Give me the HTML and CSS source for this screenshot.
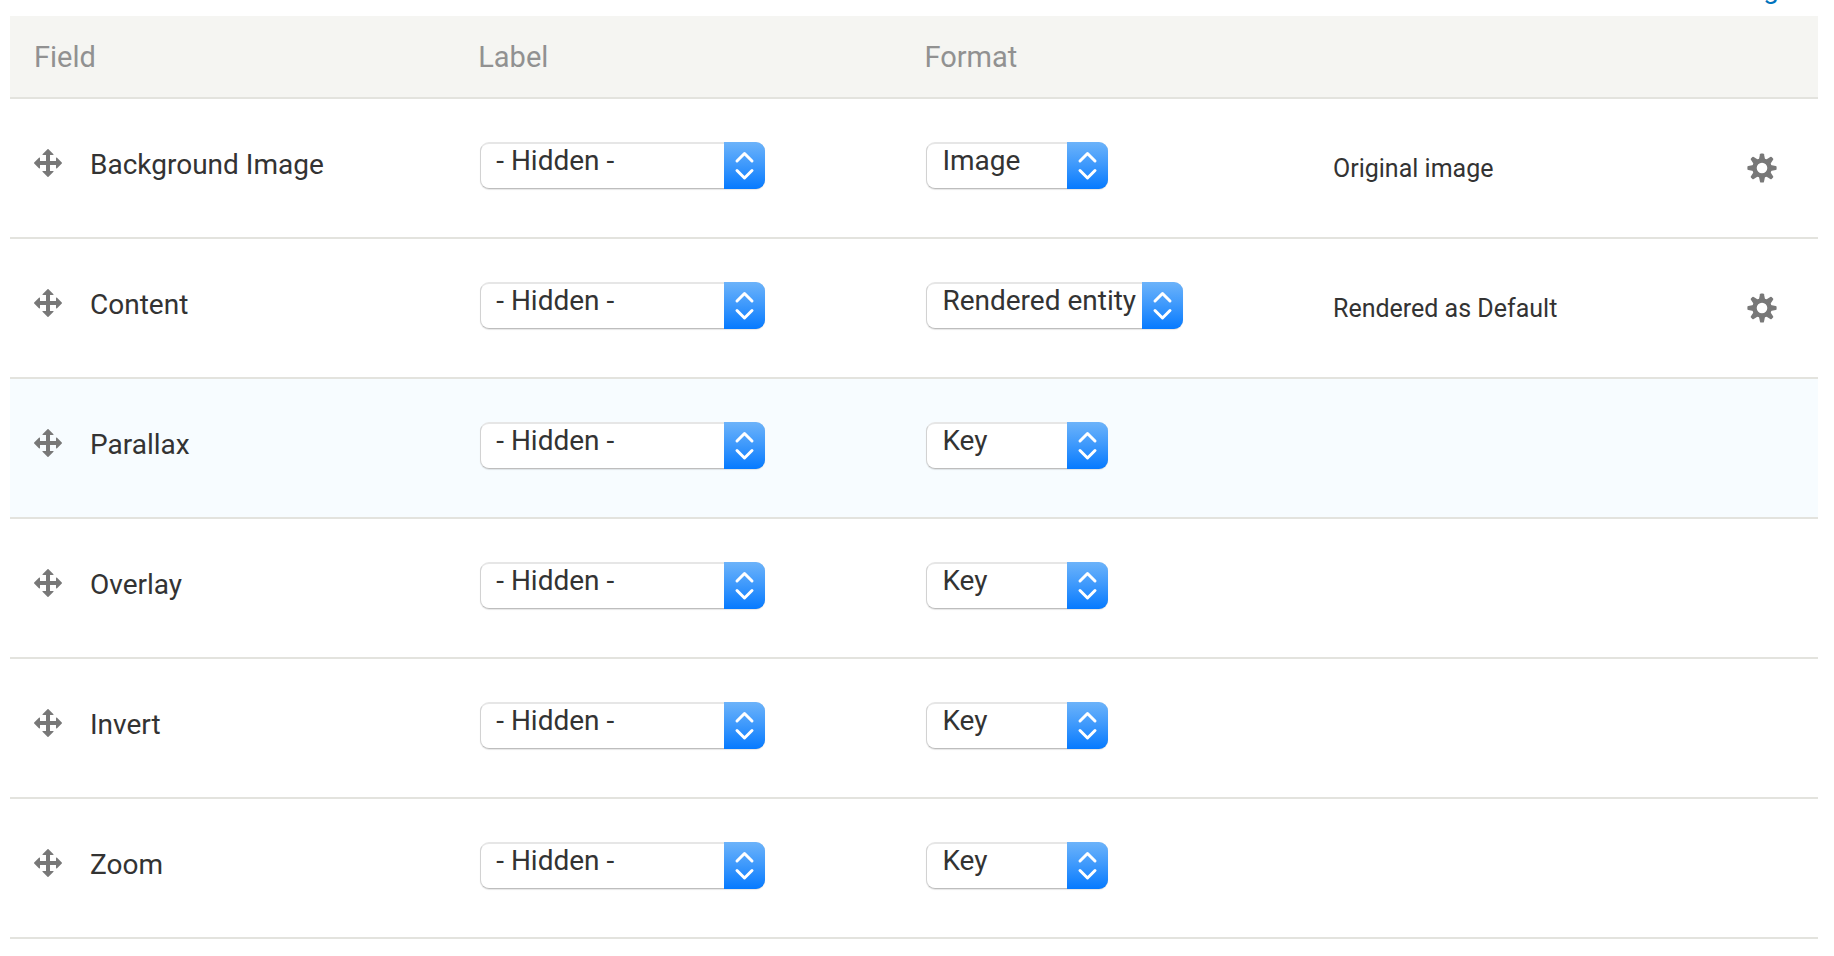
FILE: index.html
```html
<!DOCTYPE html>
<html lang="en">
<head>
<meta charset="utf-8">
<meta name="viewport" content="width=device-width, initial-scale=1">
<title>Manage display</title>
<link rel="stylesheet" href="styles.css">
</head>
<body>
<svg class="sprite" aria-hidden="true">
  <symbol id="move" viewBox="0 0 16 16"><path d="M14.904 7.753l-2.373-2.372c-.291-.292-.529-.193-.529.22v1.399h-3v-3h1.4c.413 0 .511-.238.22-.529l-2.372-2.373c-.137-.136-.36-.136-.497 0l-2.372 2.372c-.292.292-.193.53.219.53h1.4v3h-3v-1.4c0-.413-.239-.511-.53-.22l-2.372 2.373c-.136.137-.136.36 0 .497l2.372 2.372c.292.292.53.193.53-.219v-1.4h3v3h-1.4c-.413 0-.511.238-.22.529l2.373 2.373c.137.136.36.136.497 0l2.372-2.372c.292-.292.193-.53-.219-.53h-1.4v-3h3v1.4c0 .413.238.511.529.22l2.373-2.373c.136-.137.136-.36 0-.497z"/></symbol>
  <symbol id="cog" viewBox="-16 -16 32 32">
    <path fill-rule="evenodd" d="M0-9.8A9.8 9.8 0 1 1 0 9.8A9.8 9.8 0 1 1 0-9.8zM0-5.3A5.3 5.3 0 1 0 0 5.3A5.3 5.3 0 1 0 0-5.3z"/>
    <g id="teeth">
      <path d="M-3.1-8.6L-2-13.7Q-1.8-14.6-1-14.6H1Q1.8-14.6 2-13.7L3.1-8.6z"/>
      <path d="M-3.1 8.6L-2 13.7Q-1.8 14.6-1 14.6H1Q1.8 14.6 2 13.7L3.1 8.6z"/>
      <path d="M-8.6-3.1L-13.7-2Q-14.6-1.8-14.6-1V1Q-14.6 1.8-13.7 2L-8.6 3.1z"/>
      <path d="M8.6-3.1L13.7-2Q14.6-1.8 14.6-1V1Q14.6 1.8 13.7 2L8.6 3.1z"/>
    </g>
    <use href="#teeth" transform="rotate(45)"/>
  </symbol>
  <symbol id="updown" viewBox="0 0 41 47"><path d="M13 19L20.500 11.500L28 19M13 28.500L20.500 36L28 28.500"/></symbol>
</svg>

<main class="page">
  <div class="toolbar"><button type="button" class="weights">Show row weights</button></div>
  <table class="fields">
    <colgroup><col class="col-field"><col class="col-label"><col class="col-format"><col class="col-summary"><col class="col-ops"></colgroup>
    <thead>
      <tr><th scope="col">Field</th><th scope="col">Label</th><th scope="col">Format</th><td></td><td></td></tr>
    </thead>
    <tbody>
      <tr>
        <td><div class="name"><svg class="icon"><use href="#move"/></svg><span>Background Image</span></div></td>
        <td><span class="select wide"><select aria-label="Label for Background Image"><option>- Hidden -</option></select><svg class="arrows"><use href="#updown"/></svg></span></td>
        <td><span class="select"><select aria-label="Format for Background Image"><option>Image</option></select><svg class="arrows"><use href="#updown"/></svg></span></td>
        <td class="summary">Original image</td>
        <td class="ops"><button type="button" class="cog" aria-label="Edit Background Image"><svg class="icon"><use href="#cog"/></svg></button></td>
      </tr>
      <tr>
        <td><div class="name"><svg class="icon"><use href="#move"/></svg><span>Content</span></div></td>
        <td><span class="select wide"><select aria-label="Label for Content"><option>- Hidden -</option></select><svg class="arrows"><use href="#updown"/></svg></span></td>
        <td><span class="select medium"><select aria-label="Format for Content"><option>Rendered entity</option></select><svg class="arrows"><use href="#updown"/></svg></span></td>
        <td class="summary">Rendered as Default</td>
        <td class="ops"><button type="button" class="cog" aria-label="Edit Content"><svg class="icon"><use href="#cog"/></svg></button></td>
      </tr>
      <tr class="active">
        <td><div class="name"><svg class="icon"><use href="#move"/></svg><span>Parallax</span></div></td>
        <td><span class="select wide"><select aria-label="Label for Parallax"><option>- Hidden -</option></select><svg class="arrows"><use href="#updown"/></svg></span></td>
        <td><span class="select"><select aria-label="Format for Parallax"><option>Key</option></select><svg class="arrows"><use href="#updown"/></svg></span></td>
        <td></td><td></td>
      </tr>
      <tr>
        <td><div class="name"><svg class="icon"><use href="#move"/></svg><span>Overlay</span></div></td>
        <td><span class="select wide"><select aria-label="Label for Overlay"><option>- Hidden -</option></select><svg class="arrows"><use href="#updown"/></svg></span></td>
        <td><span class="select"><select aria-label="Format for Overlay"><option>Key</option></select><svg class="arrows"><use href="#updown"/></svg></span></td>
        <td></td><td></td>
      </tr>
      <tr>
        <td><div class="name"><svg class="icon"><use href="#move"/></svg><span>Invert</span></div></td>
        <td><span class="select wide"><select aria-label="Label for Invert"><option>- Hidden -</option></select><svg class="arrows"><use href="#updown"/></svg></span></td>
        <td><span class="select"><select aria-label="Format for Invert"><option>Key</option></select><svg class="arrows"><use href="#updown"/></svg></span></td>
        <td></td><td></td>
      </tr>
      <tr>
        <td><div class="name"><svg class="icon"><use href="#move"/></svg><span>Zoom</span></div></td>
        <td><span class="select wide"><select aria-label="Label for Zoom"><option>- Hidden -</option></select><svg class="arrows"><use href="#updown"/></svg></span></td>
        <td><span class="select"><select aria-label="Format for Zoom"><option>Key</option></select><svg class="arrows"><use href="#updown"/></svg></span></td>
        <td></td><td></td>
      </tr>
    </tbody>
  </table>
</main>
</body>
</html>
```
FILE: styles.css
```css
* { box-sizing: border-box; }

body {
  margin: 0;
  background: #fff;
  color: #333;
  font: 28px/32px Roboto, sans-serif;
}

button {
  margin: 0;
  padding: 0;
  border: 0;
  background: none;
  font: inherit;
  cursor: pointer;
}

.sprite {
  position: absolute;
  width: 0;
  height: 0;
}

.page { padding: 0 16px 16px 10px; }

.toolbar {
  display: flex;
  align-items: flex-end;
  justify-content: flex-end;
  height: 16px;
  padding-bottom: 13px;
  overflow: hidden;
}

.weights {
  color: #0074bd;
  line-height: 28px;
}

.fields {
  width: 100%;
  table-layout: fixed;
  border-collapse: separate;
  border-spacing: 0;
}

.col-field,
.col-label { width: 24.68%; }
.col-format { width: 22.6%; }
.col-summary { width: 22.4%; }

.fields th,
.fields td {
  padding: 0 22px;
  border-bottom: 2px solid #e3e3de;
  text-align: left;
  vertical-align: middle;
}

.fields thead th,
.fields thead td {
  height: 83px;
  background: #f5f5f2;
  color: #919191;
  font-size: 29px;
  font-weight: 400;
}

.fields thead th:first-child { padding-left: 24px; }

.fields tbody td {
  height: 140px;
  padding-bottom: 6px;
}

.active td { background: #f7fcff; }

.name {
  display: flex;
  align-items: center;
  gap: 26px;
  padding-bottom: 4px;
}

.name span { padding-top: 4px; }

.icon {
  display: block;
  flex: none;
  width: 32px;
  height: 32px;
  fill: #787878;
}

.select {
  display: flex;
  position: relative;
  width: 182px;
  height: 47px;
  margin-left: 2px;
}
.select.wide { width: 285px; }
.select.medium { width: 257px; }

select {
  width: 100%;
  margin: 0;
  padding: 0 41px 10px 15px;
  appearance: none;
  border: 1px solid #d2d2d2;
  border-top: 2px solid #e6e6e6;
  border-bottom-color: #bdbdbd;
  border-radius: 9px;
  background: #fff;
  box-shadow: 0 1px 1px rgba(0, 0, 0, 0.1);
  color: #333;
  font: inherit;
}

.arrows {
  position: absolute;
  top: 0;
  right: 0;
  width: 41px;
  height: 47px;
  border-radius: 0 9px 9px 0;
  background: linear-gradient(#6cb3fa, #3c98fc 50%, #067aff);
  fill: none;
  stroke: #fff;
  stroke-width: 3;
  stroke-linecap: round;
  stroke-linejoin: round;
  pointer-events: none;
}

.fields .summary {
  padding-top: 2px;
  padding-bottom: 0;
  font-size: 25px;
}

.fields .ops { padding-bottom: 0; }

.cog {
  display: block;
  margin: 0 18px 0 auto;
}
```
